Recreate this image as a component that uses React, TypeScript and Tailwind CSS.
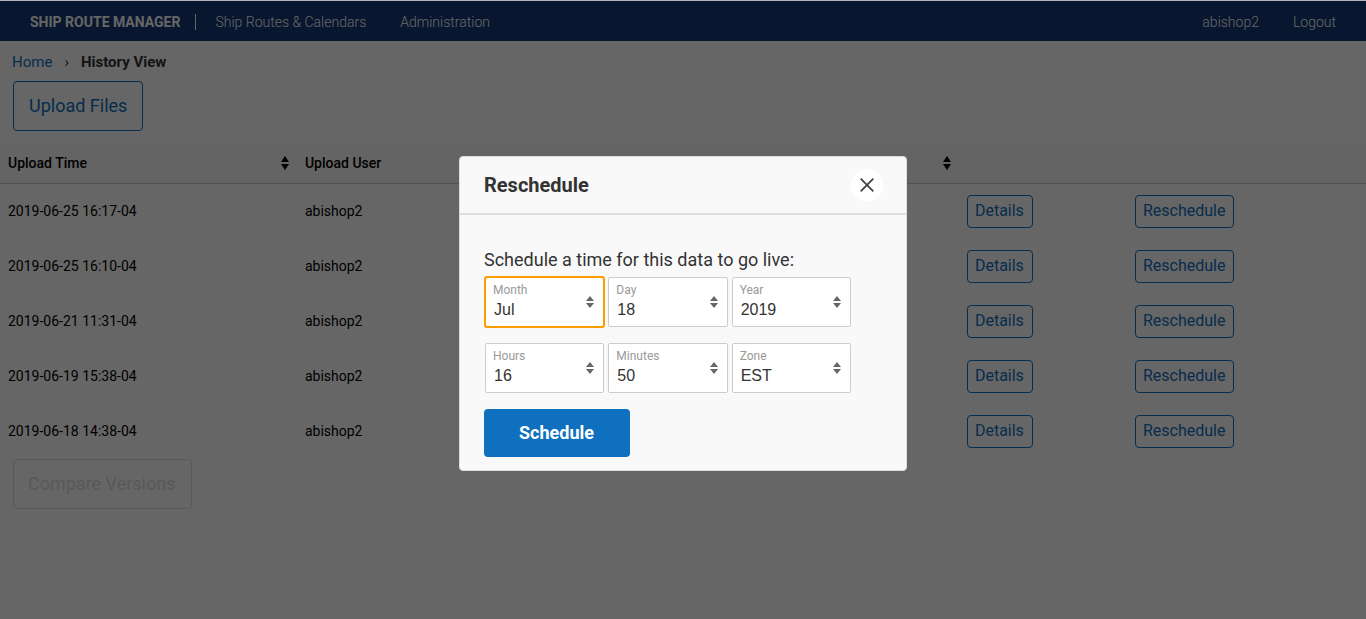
import React from "react";

const uploads = [
  { time: "2019-06-25 16:17-04", user: "abishop2" },
  { time: "2019-06-25 16:10-04", user: "abishop2" },
  { time: "2019-06-21 11:31-04", user: "abishop2" },
  { time: "2019-06-19 15:38-04", user: "abishop2" },
  { time: "2019-06-18 14:38-04", user: "abishop2" },
];

const fields = [
  { id: "month", label: "Month", value: "Jul" },
  { id: "day", label: "Day", value: "18" },
  { id: "year", label: "Year", value: "2019" },
  { id: "hours", label: "Hours", value: "16" },
  { id: "minutes", label: "Minutes", value: "50" },
  { id: "zone", label: "Zone", value: "EST" },
];

function HeaderSortIcon() {
  return (
    <svg width="8" height="14" viewBox="0 0 8 14" aria-hidden="true">
      <path d="M4 0 8 6H0ZM4 14 8 8H0Z" fill="#000" />
    </svg>
  );
}

function RowButton({ children }: { children: React.ReactNode }) {
  return (
    <button
      type="button"
      className="block h-[33px] rounded-[4px] border border-[#0f70c0] pr-2 pb-0.5 pl-[7px] text-base leading-5 text-[#0f70c0]"
    >
      {children}
    </button>
  );
}

function NavBar() {
  return (
    <nav className="flex h-10 items-center bg-[#143876] px-[30px] pt-0.5 text-sm font-light text-white">
      <span className="border-r border-white pr-[15px] font-bold leading-4">SHIP ROUTE MANAGER</span>
      <a href="#routes" className="ml-[19px]">Ship Routes &amp; Calendars</a>
      <a href="#admin" className="ml-[34px]">Administration</a>
      <a href="#user" className="ml-auto">abishop2</a>
      <a href="#logout" className="ml-[34px]">Logout</a>
    </nav>
  );
}

function UploadTable() {
  return (
    <table className="w-full table-fixed border-separate border-spacing-0 text-sm text-black">
      <colgroup>
        <col className="w-[21.74%]" />
        <col className="w-[48.46%]" />
        <col className="w-[12.3%]" />
        <col className="w-[17.5%]" />
      </colgroup>
      <thead>
        <tr className="h-10 bg-[#f9f9f9] text-left">
          <th className="border-b border-[#ccc] px-2 pt-0 pb-0.5 font-medium">
            <div className="flex items-center justify-between">
              Upload Time
              <HeaderSortIcon />
            </div>
          </th>
          <th className="border-b border-[#ccc] px-2 pt-0 pb-0.5 font-medium">
            <div className="flex items-center justify-between">
              Upload User
              <HeaderSortIcon />
            </div>
          </th>
          <th className="border-b border-[#ccc]" />
          <th className="border-b border-[#ccc]" />
        </tr>
      </thead>
      <tbody>
        {uploads.map((row) => (
          <tr key={row.time} className="h-[55px]">
            <td className="px-2 pt-0 pb-0.5">{row.time}</td>
            <td className="px-2 pt-0 pb-0.5">{row.user}</td>
            <td className="px-2 py-0">
              <RowButton>Details</RowButton>
            </td>
            <td className="px-2 py-0">
              <RowButton>Reschedule</RowButton>
            </td>
          </tr>
        ))}
      </tbody>
    </table>
  );
}

function SelectField({ id, label, value, active }: { id: string; label: string; value: string; active: boolean }) {
  return (
    <div className="relative">
      <label htmlFor={id} className="absolute top-[5px] left-2 text-xs leading-4 text-[#999]">
        {label}
      </label>
      <select
        id={id}
        defaultValue={value}
        className={
          active
            ? "block h-[50px] w-full appearance-none rounded-[2px] border border-[#ff9d00] bg-white pt-4 pl-2 font-['Liberation_Sans',sans-serif] text-base text-[#333] outline-2 -outline-offset-1 outline-[#ff9d00]"
            : "block h-[50px] w-full appearance-none rounded-[2px] border border-[#ccc] bg-white pt-4 pl-2 font-['Liberation_Sans',sans-serif] text-base text-[#333]"
        }
      >
        <option>{value}</option>
      </select>
      <svg
        className="pointer-events-none absolute top-[19px] right-2.5"
        width="8"
        height="12"
        viewBox="0 0 8 12"
        aria-hidden="true"
      >
        <path d="M4 0 8 5H0ZM4 12 8 7H0Z" fill="#666" />
      </svg>
    </div>
  );
}

function RescheduleDialog() {
  return (
    <section
      role="dialog"
      aria-modal="true"
      aria-labelledby="dialog-title"
      className="w-full max-w-[448px] rounded-[4px] border border-[#ddd] bg-[#f9f9f9] text-[#333]"
    >
      <header className="flex h-[58px] items-center justify-between border-b-2 border-[#ddd] pr-[23px] pl-6">
        <h2 id="dialog-title" className="text-xl font-bold">Reschedule</h2>
        <button
          type="button"
          aria-label="Close"
          className="flex size-8 items-center justify-center rounded-full bg-white"
        >
          <svg width="14" height="14" viewBox="0 0 14 14" aria-hidden="true">
            <path d="M.7.7 13.3 13.3M13.3.7.7 13.3" stroke="#444" strokeWidth="1.8" fill="none" />
          </svg>
        </button>
      </header>
      <form className="px-6 pt-8 pb-[13px]" onSubmit={(e) => e.preventDefault()}>
        <p className="text-lg leading-[26px]">Schedule a time for this data to go live:</p>
        <div className="mt-1 ml-px grid max-w-[366px] grid-cols-3 gap-x-1 gap-y-4">
          {fields.map((f, i) => (
            <SelectField key={f.id} id={f.id} label={f.label} value={f.value} active={i === 0} />
          ))}
        </div>
        <button
          type="submit"
          className="mt-4 block h-12 rounded-[4px] bg-[#0f70c0] pr-9 pl-[35px] text-lg font-bold text-white"
        >
          Schedule
        </button>
      </form>
    </section>
  );
}

export default function App() {
  return (
    <div className="relative min-h-screen border-t border-[#b3b3b3] bg-white font-[Roboto,sans-serif]">
      <NavBar />
      <main>
        <div className="flex h-10 items-center gap-3 px-3 pt-0.5 text-[15px] text-[#333]">
          <a href="#home" className="text-[#0f70c0]">Home</a>
          <span>›</span>
          <strong className="font-bold">History View</strong>
        </div>
        <button
          type="button"
          className="mb-[13px] ml-[13px] block h-[50px] rounded-[4px] border border-[#0f70c0] px-[15px] text-lg text-[#0f70c0]"
        >
          Upload Files
        </button>
        <UploadTable />
        <button
          type="button"
          disabled
          className="ml-[13px] block h-[50px] rounded-[4px] border border-[#ddd] pr-[15px] pl-3.5 text-lg text-[#ddd]"
        >
          Compare Versions
        </button>
      </main>
      <div className="absolute inset-0 flex items-center justify-center bg-black/60 pt-1.5">
        <RescheduleDialog />
      </div>
    </div>
  );
}
